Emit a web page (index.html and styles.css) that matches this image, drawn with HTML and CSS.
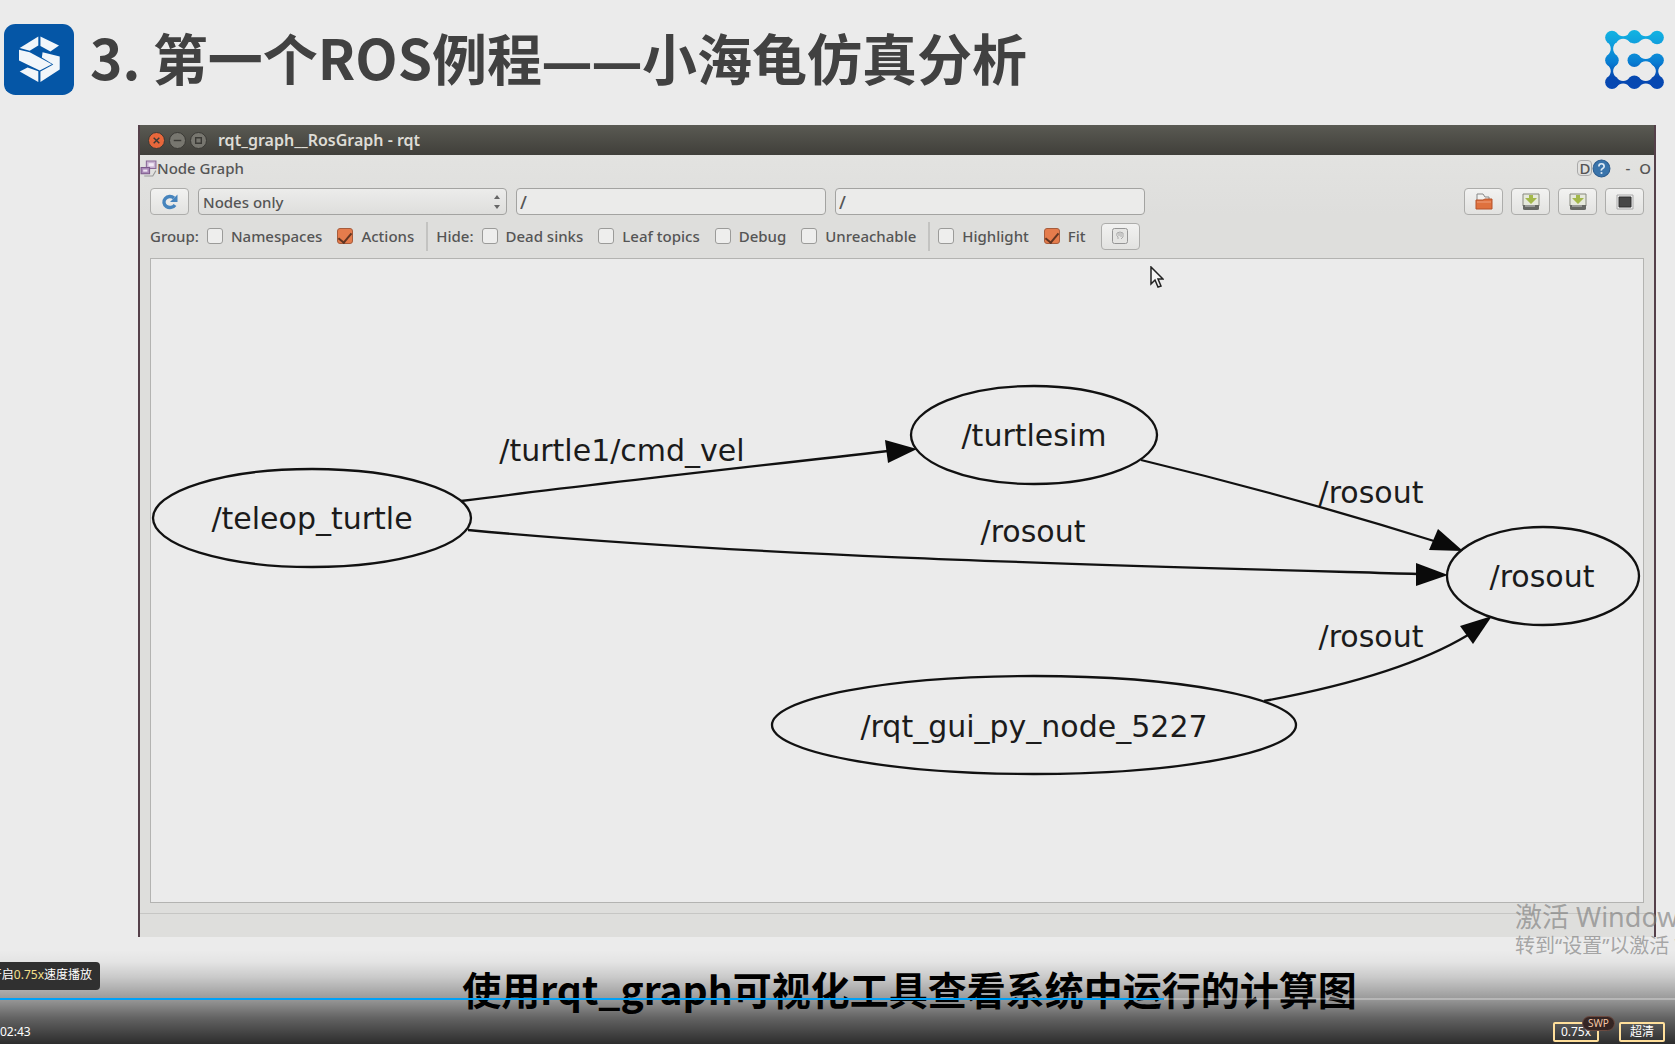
FILE: index.html
```html
<!DOCTYPE html>
<html lang="zh-CN">
<head>
<meta charset="utf-8">
<meta name="viewport" content="width=device-width, initial-scale=1">
<title>ROS 例程</title>
<link rel="stylesheet" href="styles.css">
</head>
<body>
<main class="slide">
  <header class="slide-header">
    <svg class="brand" viewBox="12 70 196 212" preserveAspectRatio="none" aria-hidden="true">
      <rect x="12" y="70" width="196" height="212" rx="32" fill="#0556a6"/>
      <g fill="#f2f6fa">
        <path d="M108 107V134L84 150L56 142Z"/>
        <path d="M114 107L166 134L142 152L114 136Z"/>
        <path d="M54 147L84 154L146 190L112 209L54 179Z"/>
        <path d="M120 154L168 167V206L114 243V212L150 191L118 170Z"/>
        <path d="M108 211V243L56 212L78 200Z"/>
      </g>
    </svg>
    <h1 class="title">3. 第一个ROS例程<span class="dash">——</span>小海龟仿真分析</h1>
    <svg class="partner" viewBox="138 93 173 174" aria-hidden="true">
      <defs>
        <linearGradient id="sea" gradientUnits="userSpaceOnUse" x1="0" y1="93" x2="0" y2="267">
          <stop offset="0" stop-color="#12b4e2"/><stop offset=".2" stop-color="#10a2de"/>
          <stop offset=".55" stop-color="#087dd2"/><stop offset=".8" stop-color="#0648b0"/><stop offset="1" stop-color="#0748b4"/>
        </linearGradient>
      </defs>
      <g fill="url(#sea)">
        <circle cx="158" cy="115" r="20"/><circle cx="224" cy="113" r="20"/><circle cx="291" cy="115" r="20"/>
        <circle cx="158" cy="182" r="20"/><circle cx="224" cy="182" r="20"/><circle cx="291" cy="182" r="20"/>
        <circle cx="158" cy="247" r="20"/><circle cx="224" cy="247" r="20"/><circle cx="291" cy="247" r="20"/>
        <path d="M168 99Q191 124 214 99V131Q191 106 168 131Z"/>
        <path d="M234 99Q258 124 281 99V131Q258 106 234 131Z"/>
        <path d="M234 166Q258 191 281 166V198Q258 173 234 198Z"/>
        <path d="M168 231Q191 256 214 231V263Q191 238 168 263Z"/>
        <path d="M234 231Q258 256 281 231V263Q258 238 234 263Z"/>
        <path d="M142 125Q167 148 142 172H174Q149 148 174 125Z"/>
        <path d="M142 192Q167 215 142 237H174Q149 215 174 192Z"/>
        <path d="M275 192Q300 215 275 237H307Q282 215 307 192Z"/>
      </g>
    </svg>
  </header>

  <section class="window">
    <div class="titlebar">
      <button class="wm wm-close" aria-label="Close"><svg viewBox="0 0 16 16"><path d="M5 5L11 11M11 5L5 11"/></svg></button>
      <button class="wm" aria-label="Minimize"><svg viewBox="0 0 16 16"><path d="M4 8H12"/></svg></button>
      <button class="wm" aria-label="Maximize"><svg viewBox="0 0 16 16"><path d="M5 5H11V11H5Z"/></svg></button>
      <span class="window-name">rqt_graph__RosGraph - rqt</span>
    </div>

    <div class="dock">
      <svg class="dock-icon" viewBox="0 0 16 16" aria-hidden="true">
        <path d="M6 1H15V8H6Z" fill="#c9b3d2" stroke="#8a6a98"/><path d="M8 3H13V6H8Z" fill="#f1e9f4"/>
        <path d="M1 7H9V13H1Z" fill="#a98ab8" stroke="#7c5a8c"/><path d="M3 9H7V11H3Z" fill="#eee3f2"/>
        <path d="M4 15H12L15 10" fill="none" stroke="#999"/>
      </svg>
      <span>Node Graph</span>
      <span class="dock-actions">
        <button class="flat flat-d">D</button>
        <button class="flat help" aria-label="Help"><svg viewBox="0 0 18 18"><circle cx="9" cy="9" r="8" fill="#3a74ab" stroke="#2c5c8e"/><path d="M6.500 7Q6.500 4.500 9 4.500T11.500 7Q11.500 8.200 10 9T9 11" fill="none" stroke="#dfeaf5" stroke-width="1.600"/><circle cx="9" cy="13.300" r="1" fill="#dfeaf5"/></svg></button>
        <button class="flat flat-dash">-</button>
        <button class="flat">O</button>
      </span>
    </div>

    <div class="toolbar">
      <button class="tool" aria-label="Refresh"><svg viewBox="0 0 18 18"><path d="M14 12A6 5.500 0 1 1 13 5" fill="none" stroke="#4684bd" stroke-width="3.400"/><path d="M16.500 1.500V9H9Z" fill="#4684bd"/></svg></button>
      <span class="combo">
        <select aria-label="Graph type"><option>Nodes only</option></select>
        <svg class="combo-arrows" viewBox="0 0 8 14" aria-hidden="true"><path d="M1 4L4 0L7 4ZM1 10L4 14L7 10Z" fill="#666"/></svg>
      </span>
      <input class="filter" type="text" value="/" aria-label="Node filter">
      <input class="filter" type="text" value="/" aria-label="Topic filter">
      <span class="file-tools">
        <button class="tool" aria-label="Load"><svg viewBox="0 0 20 18"><path d="M3 9V1H9L11 4H15V9" fill="#f2f2f0" stroke="#888"/><path d="M2 16V7H9L11 6H18V16Z" fill="#df713e" stroke="#b5532a"/><path d="M3 9H17" stroke="#f0a17c"/></svg></button>
        <button class="tool" aria-label="Save"><svg viewBox="0 0 20 18"><path d="M2 1H18V13H2Z" fill="#e6e9dc" stroke="#87897f"/><path d="M8 2H12V5H16L10 11L4 5H8Z" fill="#a3b84b"/><path d="M2 12H18V16Q18 17 16 17H4Q2 17 2 16Z" fill="#666864"/><path d="M4 13H14" stroke="#ccc"/></svg></button>
        <button class="tool" aria-label="Save as SVG"><svg viewBox="0 0 20 18"><path d="M2 1H18V13H2Z" fill="#e6e9dc" stroke="#87897f"/><path d="M8 2H12V5H16L10 11L4 5H8Z" fill="#a3b84b"/><path d="M2 12H18V16Q18 17 16 17H4Q2 17 2 16Z" fill="#666864"/><path d="M4 13H14" stroke="#ccc"/></svg></button>
        <button class="tool" aria-label="Save as image"><svg viewBox="0 0 20 18"><path d="M2 2H18V16H2Z" fill="#eee" stroke="#aaa"/><path d="M4 4H16V14H4Z" fill="#474747" stroke="#2f2f2f"/></svg></button>
      </span>
    </div>

    <div class="options">
      <span class="group">Group:</span>
      <label class="check"><input type="checkbox">Namespaces</label>
      <label class="check"><input type="checkbox" checked>Actions</label>
      <span class="divider"></span>
      <span class="group">Hide:</span>
      <label class="check"><input type="checkbox">Dead sinks</label>
      <label class="check"><input type="checkbox">Leaf topics</label>
      <label class="check"><input type="checkbox">Debug</label>
      <label class="check"><input type="checkbox">Unreachable</label>
      <span class="divider"></span>
      <label class="check"><input type="checkbox">Highlight</label>
      <label class="check"><input type="checkbox" checked>Fit</label>
      <button class="tool" aria-label="Fit in view"><svg viewBox="0 0 18 18"><rect x="1.500" y="1.500" width="15" height="15" rx="2" fill="#e5e5e3" stroke="#959595"/><path d="M7 12V10Q5 9 6 6Q9 4 12 6V10L10 12M8 6V9M10 6V10" fill="none" stroke="#aaa"/></svg></button>
    </div>

    <div class="canvas">
      <svg class="graph" viewBox="151 259 1492 643">
        <g class="edges">
          <path d="M461 501C600 483 750 467 888 451"/>
          <path d="M468 530C760 557 1100 565 1418 574"/>
          <path d="M1141 460Q1290 496 1434 541"/>
          <path d="M1264 701Q1400 676 1468 635"/>
        </g>
        <g class="heads">
          <path d="M885 440L917 449L888 463Z"/>
          <path d="M1416 563L1448 575L1416 586Z"/>
          <path d="M1438 529L1463 551L1429 550Z"/>
          <path d="M1460 626L1492 616L1473 644Z"/>
        </g>
        <g class="nodes">
          <ellipse cx="312" cy="518" rx="159" ry="49"/>
          <ellipse cx="1034" cy="435" rx="123" ry="49"/>
          <ellipse cx="1543" cy="576" rx="96" ry="49"/>
          <ellipse cx="1034" cy="725" rx="262" ry="49"/>
        </g>
        <g class="labels">
          <text x="312" y="529">/teleop_turtle</text>
          <text x="1034" y="446">/turtlesim</text>
          <text x="1542" y="587">/rosout</text>
          <text x="1034" y="737">/rqt_gui_py_node_5227</text>
          <text x="622" y="461">/turtle1/cmd_vel</text>
          <text x="1371" y="503">/rosout</text>
          <text x="1033" y="542">/rosout</text>
          <text x="1371" y="647">/rosout</text>
        </g>
      </svg>
    </div>
    <div class="statusbar"></div>
  </section>

  <p class="caption">使用rqt_graph可视化工具查看系统中运行的计算图</p>

  <svg class="pointer" viewBox="0 0 14 22" aria-hidden="true"><path d="M1 1V18L5 14L8 21L11 20L8 13H13Z" fill="#f4f4f4" stroke="#222" stroke-width="1.500"/></svg>

  <aside class="activation">
    <p class="activation-title">激活 Windows</p>
    <p class="activation-hint">转到“设置”以激活 Windows。</p>
  </aside>

  <div class="toast"><span>已开启<em>0.75x</em>速度播放</span></div>

  <footer class="player">
    <progress class="seek" max="1675" value="1164" aria-label="播放进度"></progress>
    <div class="controls">
      <span class="time">02:43</span>
      <button class="pill">0.75x<span class="vip">SWP</span></button>
      <button class="pill">超清</button>
    </div>
  </footer>
</main>
</body>
</html>
```
FILE: styles.css
```css
* { box-sizing: border-box; }

body {
  margin: 0;
  background: #ebebeb;
  font-family: "Noto Sans", "Noto Sans CJK SC", sans-serif;
  color: #555;
}

button, input, select { font: inherit; color: inherit; margin: 0; }
button { padding: 0; cursor: pointer; }
p, h1 { margin: 0; }
svg { display: block; }

.slide {
  position: relative;
  display: flex;
  flex-direction: column;
  min-height: 100vh;
  overflow: hidden;
}

/* heading */
.slide-header {
  display: flex;
  align-items: center;
  gap: 16px;
  height: 125px;
  padding: 0 11px 7px 4px;
}
.brand { width: 70px; height: 71px; flex: none; }
.partner { width: 59px; height: 59px; flex: none; margin-left: auto; }
.title {
  padding-bottom: 6px;
  font-family: "Noto Sans CJK SC", sans-serif;
  font-weight: 700;
  font-size: 55px;
  line-height: 80px;
  color: #414141;
  white-space: nowrap;
}
.dash { font-family: "Noto Sans", sans-serif; font-size: 50px; line-height: 1; }

/* application window */
.window {
  flex: 1;
  display: flex;
  flex-direction: column;
  margin: 0 19px 0 138px;
  border: solid #55404a;
  border-width: 0 2px;
  background: linear-gradient(#e5e5e3, #dededc 90px);
  font-size: 15px;
  font-weight: 500;
  line-height: 20px;
}
.titlebar {
  display: flex;
  align-items: center;
  gap: 4px;
  height: 30px;
  padding-left: 8px;
  background: linear-gradient(#5a5a53, #403f3a);
  color: #dedcd5;
}
.wm {
  width: 17px;
  height: 17px;
  border: 1px solid #3a3935;
  border-radius: 50%;
  background: #77766f;
}
.wm svg { width: 15px; height: 15px; fill: none; stroke: #3b3a36; stroke-width: 1.5; }
.wm-close { background: #e8673b; }
.window-name { margin-left: 7px; font-weight: 600; font-size: 16px; }

.dock { display: flex; align-items: center; height: 27px; padding-bottom: 1px; }
.dock-icon { width: 17px; height: 17px; }
.dock-actions { display: flex; align-items: center; margin-left: auto; padding-right: 3px; }
.flat { border: 0; background: none; }
.flat-d { width: 15px; height: 16px; line-height: 14px; border: 1px solid #aaa; border-radius: 4px; }
.flat-dash { padding: 0 9px 0 14px; }
.help svg { width: 19px; height: 19px; }

.toolbar { display: flex; align-items: center; gap: 9px; height: 39px; padding: 0 10px; }
.tool {
  display: grid;
  place-items: center;
  flex: none;
  width: 39px;
  height: 27px;
  border: 1px solid #adadab;
  border-radius: 4px;
  background: linear-gradient(#f2f2f1, #e2e2e0);
}
.tool svg { height: 18px; }
.combo { position: relative; flex: 0 1 309px; }
.combo select {
  appearance: none;
  width: 100%;
  height: 27px;
  padding: 0 4px;
  border: 1px solid #a3a3a1;
  border-radius: 4px;
  background: linear-gradient(#ececeb, #dededc);
}
.combo-arrows { position: absolute; right: 6px; top: 7px; width: 8px; height: 14px; pointer-events: none; }
.filter {
  flex: 0 1 310px;
  min-width: 0;
  height: 27px;
  padding: 0 3px;
  border: 1px solid #a3a3a1;
  border-radius: 4px;
  background: #ebebea;
  font-size: 18px;
}
.file-tools { display: flex; gap: 8px; margin-left: auto; }

.options { display: flex; align-items: center; height: 37px; padding: 0 10px 7px; white-space: nowrap; }
.group { margin-right: 8px; }
.check { display: flex; align-items: center; gap: 8px; margin-right: 15px; }
.check:has(+ .divider) { margin-right: 12px; }
.check input {
  appearance: none;
  display: grid;
  place-items: center;
  width: 16px;
  height: 16px;
  border: 1px solid #9b9b99;
  border-radius: 3px;
  background: #eeeeed;
}
.check input:checked { background: #e57c4c; border-color: #a65c3c; }
.check input:checked::after {
  content: "";
  width: 6px;
  height: 11px;
  border: solid #623522;
  border-width: 0 2px 2px 0;
  transform: rotate(40deg);
}
.divider { width: 2px; height: 29px; margin-right: 8px; background: #c3c3c1; }

.canvas {
  flex: 1;
  margin: 0 10px;
  border: 1px solid #b3b3b1;
  background: #ebebeb;
}
.graph { width: 100%; height: auto; }
.edges, .nodes { fill: none; stroke: #111; stroke-width: 2.3; }
.heads { fill: #0a0a0a; }
.labels { font-family: "DejaVu Sans", sans-serif; font-size: 30px; font-weight: 400; text-anchor: middle; fill: #1b1b1b; }
.statusbar { height: 34px; padding-top: 10px; }
.statusbar::before { content: ""; display: block; border-top: 1px solid #c6c6c4; }

.caption {
  height: 107px;
  padding: 21px 0 0 26px;
  margin-left: 118px;
  font-family: "Noto Sans CJK SC", sans-serif;
  font-weight: 700;
  font-size: 39px;
  line-height: 60px;
  text-align: center;
  color: #000;
}

/* layers over the picture */
.pointer { position: absolute; left: 1150px; top: 266px; width: 14px; height: 22px; }
.activation {
  position: absolute;
  left: calc(100% - 160px);
  bottom: 86px;
  color: rgba(125, 125, 125, .65);
  white-space: nowrap;
}
.activation-title { font-size: 27px; line-height: 35px; }
.activation-hint { font-size: 20px; line-height: 24px; }

.toast {
  position: absolute;
  z-index: 2;
  left: 0;
  bottom: 54px;
  display: flex;
  justify-content: flex-end;
  width: 100px;
  height: 28px;
  padding-right: 8px;
  overflow: hidden;
  border-radius: 0 4px 4px 0;
  background: #303030;
  color: #fff;
  font-size: 12px;
  line-height: 26px;
  white-space: nowrap;
}
.toast em { font-style: normal; color: #f5e08c; }

.player {
  position: absolute;
  left: 0;
  right: 0;
  bottom: 0;
  height: 94px;
  padding-top: 48px;
  background: linear-gradient(rgba(0,0,0,0) 0, rgba(0,0,0,.03) 12px, rgba(0,0,0,.14) 27px, rgba(0,0,0,.34) 48px, rgba(0,0,0,.58) 68px, rgba(0,0,0,.81) 94px);
}
.seek {
  appearance: none;
  display: block;
  width: 100%;
  height: 2px;
  border: 0;
  background: none;
}
.seek::-webkit-progress-bar { background: rgba(255,255,255,.3); }
.seek::-webkit-progress-value { background: #00a1f7; }
.controls {
  display: flex;
  align-items: flex-end;
  gap: 20px;
  height: 44px;
  padding: 0 10px 2px 0;
  color: #fff;
  font-size: 12px;
}
.time { margin-right: auto; line-height: 20px; }
.pill {
  position: relative;
  width: 46px;
  height: 20px;
  border: 2px solid #ffdf9b;
  border-radius: 2px;
  background: none;
  line-height: 16px;
}
.vip {
  position: absolute;
  left: 27px;
  top: -8px;
  width: 33px;
  height: 15px;
  border: 1px solid #6b4a40;
  border-radius: 8px;
  background: #352523;
  color: #f3c8a8;
  font-size: 10px;
  line-height: 13px;
}
```
